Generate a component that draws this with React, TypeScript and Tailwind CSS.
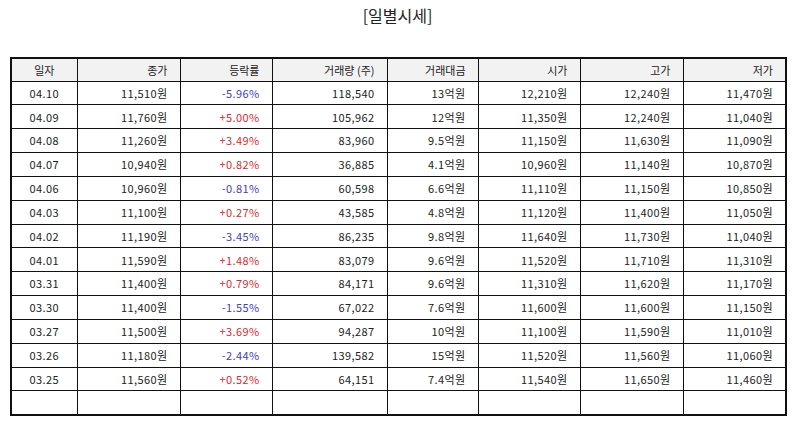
import React from "react";

type Row = [string, string, string, string, string, string, string, string];

const rows: Row[] = [
  ["04.10", "11,510원", "-5.96%", "118,540", "13억원", "12,210원", "12,240원", "11,470원"],
  ["04.09", "11,760원", "+5.00%", "105,962", "12억원", "11,350원", "12,240원", "11,040원"],
  ["04.08", "11,260원", "+3.49%", "83,960", "9.5억원", "11,150원", "11,630원", "11,090원"],
  ["04.07", "10,940원", "+0.82%", "36,885", "4.1억원", "10,960원", "11,140원", "10,870원"],
  ["04.06", "10,960원", "-0.81%", "60,598", "6.6억원", "11,110원", "11,150원", "10,850원"],
  ["04.03", "11,100원", "+0.27%", "43,585", "4.8억원", "11,120원", "11,400원", "11,050원"],
  ["04.02", "11,190원", "-3.45%", "86,235", "9.8억원", "11,640원", "11,730원", "11,040원"],
  ["04.01", "11,590원", "+1.48%", "83,079", "9.6억원", "11,520원", "11,710원", "11,310원"],
  ["03.31", "11,400원", "+0.79%", "84,171", "9.6억원", "11,310원", "11,620원", "11,170원"],
  ["03.30", "11,400원", "-1.55%", "67,022", "7.6억원", "11,600원", "11,600원", "11,150원"],
  ["03.27", "11,500원", "+3.69%", "94,287", "10억원", "11,100원", "11,590원", "11,010원"],
  ["03.26", "11,180원", "-2.44%", "139,582", "15억원", "11,520원", "11,560원", "11,060원"],
  ["03.25", "11,560원", "+0.52%", "64,151", "7.4억원", "11,540원", "11,650원", "11,460원"],
];

const headers = ["일자", "종가", "등락률", "거래량 (주)", "거래대금", "시가", "고가", "저가"];
const widths = ["w-[66px]", "w-[103px]", "w-[92px]", "w-[115px]", "w-[91px]", "w-[102px]", "w-[103px]", "w-[103px]"];

export default function App() {
  return (
    <div
      className="w-[795px] h-[425px] bg-white text-[#222]"
      style={{ fontFamily: '"Noto Sans CJK KR", "Noto Sans", sans-serif' }}
    >
      <div className="h-[57px] pt-[3px] text-center text-[16px] leading-[24px] text-[#222]">[일별시세]</div>
      <div className="px-[10px]">
        <table className="w-[775px] table-fixed border-collapse border-[2px] border-[#111] text-[11px] tracking-[0.4px]">
          <colgroup>
            {widths.map((w, i) => (
              <col key={i} className={w} />
            ))}
          </colgroup>
          <thead>
            <tr className="h-[23px] bg-[#f2f2f2]">
              {headers.map((h, i) => (
                <th
                  key={i}
                  className={`border-[1.5px] border-[#111] font-normal tracking-normal px-[12px] ${i === 0 ? "text-center" : "text-right"}`}
                >
                  {h}
                </th>
              ))}
            </tr>
          </thead>
          <tbody>
            {rows.map((r, ri) => (
              <tr key={ri} className="h-[23.85px]">
                {r.map((c, ci) => {
                  let color = "";
                  if (ci === 2) color = c.startsWith("-") ? "text-[#4040c8]" : "text-[#e0282e]";
                  return (
                    <td
                      key={ci}
                      className={`border-[1.5px] border-[#111] px-[12px] ${ci === 0 ? "text-center" : "text-right"} ${color}`}
                    >
                      {c}
                    </td>
                  );
                })}
              </tr>
            ))}
            <tr className="h-[23.85px]">
              {headers.map((_, i) => (
                <td key={i} className="border-[1.5px] border-[#111]"></td>
              ))}
            </tr>
          </tbody>
        </table>
      </div>
    </div>
  );
}
